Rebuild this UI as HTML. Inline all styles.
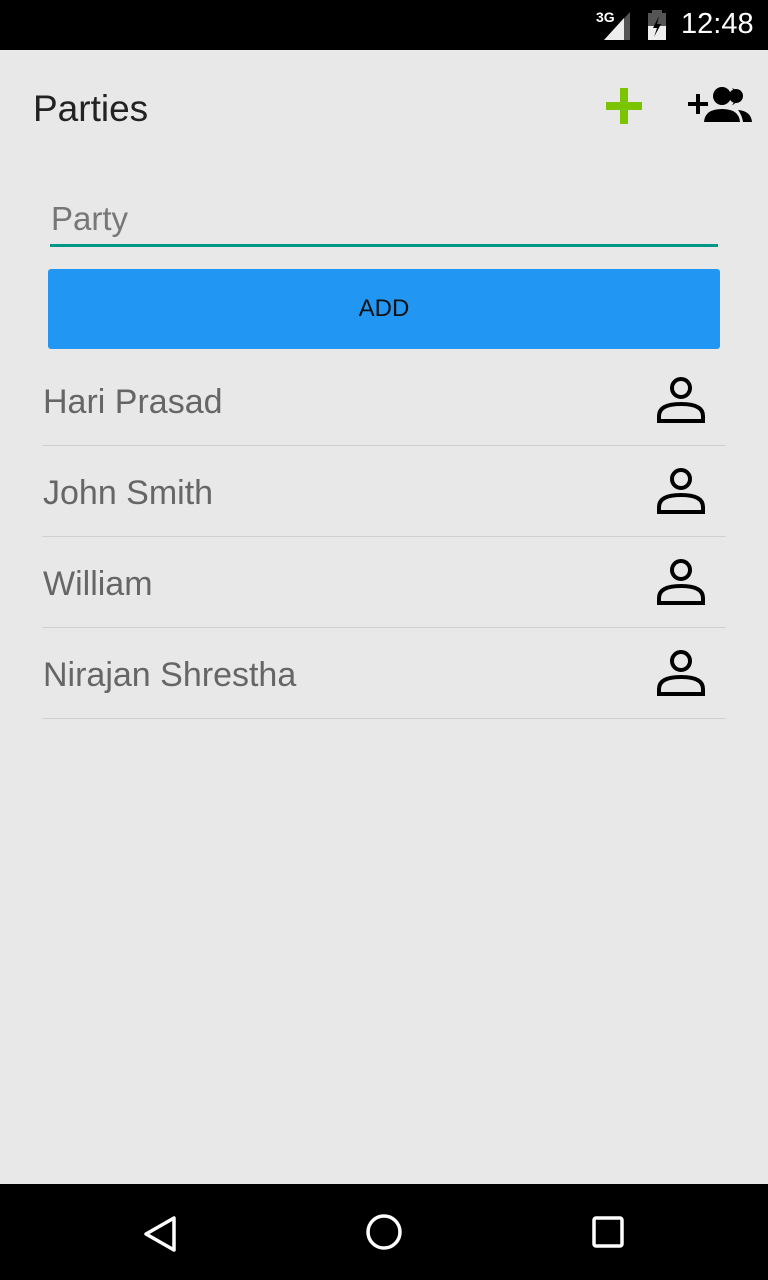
<!DOCTYPE html>
<html><head><style>
body{margin:0;width:768px;height:1280px;background:#e8e8e8;font-family:"Liberation Sans",Roboto,sans-serif;position:relative;overflow:hidden}
.sb{position:absolute;top:0;left:0;width:768px;height:50px;background:#000}
.nb{position:absolute;bottom:0;left:0;width:768px;height:96px;background:#000}
.t{position:absolute}
.row{position:absolute;left:42px;width:684px;height:90px;border-bottom:1px solid #d0d0d0}
.row span{position:absolute;left:1px;top:28px;font-size:34px;color:#666}
.row svg{position:absolute;left:613px;top:20px}
</style></head><body>
<div class="sb">
<span class="t" style="left:596px;top:9px;color:#fff;font-size:14px;font-weight:bold">3G</span>
<svg class="t" style="left:604px;top:12px" width="28" height="28"><polygon points="26,0 26,28 0,28" fill="#555"/><polygon points="20,6 20,28 0,28" fill="#eee"/></svg>
<svg class="t" style="left:646px;top:10px" width="24" height="30"><rect x="6" y="0" width="10" height="4" fill="#555"/><rect x="2" y="3" width="18" height="27" fill="#555"/><rect x="2" y="16" width="18" height="14" fill="#eee"/><polygon points="13,6 7,18 11,18 8,27 15,14 11,14" fill="#000"/></svg>
<span class="t" style="left:681px;top:8px;color:#fff;font-size:29px">12:48</span>
</div>
<span class="t" style="left:33px;top:88px;font-size:37px;color:#222">Parties</span>
<svg class="t" style="left:606px;top:88px" width="36" height="36"><rect x="14" y="0" width="8" height="36" fill="#7cc400"/><rect x="0" y="14" width="36" height="8" fill="#7cc400"/></svg>
<svg class="t" style="left:686px;top:86px" width="68" height="38" viewBox="0 0 68 38"><rect x="2" y="16" width="20" height="4" fill="#000"/><rect x="10" y="8" width="4" height="20" fill="#000"/><circle cx="36" cy="10" r="9" fill="#000"/><path d="M46 2 A9 9 0 0 1 46 19 A12 12 0 0 0 46 2Z" fill="#000"/><circle cx="50" cy="10" r="7" fill="#000"/><path d="M18 36 Q19 23 36 23 Q53 23 54 36Z" fill="#000"/><path d="M52 24 Q65 25 66 36 L57 36 Q56 29 52 24Z" fill="#000"/></svg>
<span class="t" style="left:51px;top:200px;font-size:33px;color:#777">Party</span>
<div class="t" style="left:50px;top:244px;width:668px;height:3px;background:#009688"></div>
<div class="t" style="left:48px;top:269px;width:672px;height:80px;background:#2196f3;border-radius:3px;text-align:center;line-height:80px;font-size:24px;color:#111">ADD</div>
<div class="row" style="top:355px"><span>Hari Prasad</span><svg width="52" height="52" viewBox="0 0 52 52"><circle cx="26" cy="13" r="9" fill="none" stroke="#000" stroke-width="4"/><path d="M4 46 L4 41 Q4 29 26 29 Q48 29 48 41 L48 46Z" fill="none" stroke="#000" stroke-width="4"/></svg></div>
<div class="row" style="top:446px"><span>John Smith</span><svg width="52" height="52" viewBox="0 0 52 52"><circle cx="26" cy="13" r="9" fill="none" stroke="#000" stroke-width="4"/><path d="M4 46 L4 41 Q4 29 26 29 Q48 29 48 41 L48 46Z" fill="none" stroke="#000" stroke-width="4"/></svg></div>
<div class="row" style="top:537px"><span>William</span><svg width="52" height="52" viewBox="0 0 52 52"><circle cx="26" cy="13" r="9" fill="none" stroke="#000" stroke-width="4"/><path d="M4 46 L4 41 Q4 29 26 29 Q48 29 48 41 L48 46Z" fill="none" stroke="#000" stroke-width="4"/></svg></div>
<div class="row" style="top:628px"><span>Nirajan Shrestha</span><svg width="52" height="52" viewBox="0 0 52 52"><circle cx="26" cy="13" r="9" fill="none" stroke="#000" stroke-width="4"/><path d="M4 46 L4 41 Q4 29 26 29 Q48 29 48 41 L48 46Z" fill="none" stroke="#000" stroke-width="4"/></svg></div>
<div class="nb">
<svg class="t" style="left:140px;top:30px" width="40" height="40"><polygon points="34,4 34,36 6,20" fill="none" stroke="#fff" stroke-width="3.5" stroke-linejoin="round"/></svg>
<svg class="t" style="left:364px;top:28px" width="40" height="40"><circle cx="20" cy="20" r="16" fill="none" stroke="#fff" stroke-width="3.5"/></svg>
<svg class="t" style="left:590px;top:30px" width="36" height="36"><rect x="4" y="4" width="28" height="28" rx="2" fill="none" stroke="#fff" stroke-width="3.5"/></svg>
</div>
</body></html>
